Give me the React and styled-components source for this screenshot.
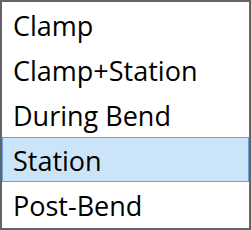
import React from 'react';
import styled, { createGlobalStyle } from 'styled-components';

const GlobalStyle = createGlobalStyle`
  html, body {
    margin: 0;
    padding: 0;
    background: #ffffff;
  }
`;

const ListBox = styled.div`
  box-sizing: border-box;
  width: 251px;
  height: 230px;
  border: 2px solid #646464;
  background: #ffffff;
  display: flex;
  flex-direction: column;
  overflow: hidden;
`;

const Item = styled.div`
  box-sizing: border-box;
  height: 45px;
  flex: 0 0 45px;
  display: flex;
  align-items: center;
  padding: 1px 0 0 10px;
  font-family: "Open Sans", "Noto Sans", sans-serif;
  font-size: 27px;
  color: #000000;
  white-space: nowrap;
  border: 1px solid ${props => (props.selected ? '#62a2e0' : 'transparent')};
  background: ${props => (props.selected ? '#cce4f7' : 'transparent')};
`;

const items = ['Clamp', 'Clamp+Station', 'During Bend', 'Station', 'Post-Bend'];

const App = () => {
  return (
    <>
      <GlobalStyle />
      <ListBox>
        {items.map(label => (
          <Item key={label} selected={label === 'Station'}>
            {label}
          </Item>
        ))}
      </ListBox>
    </>
  );
};

export default App;
